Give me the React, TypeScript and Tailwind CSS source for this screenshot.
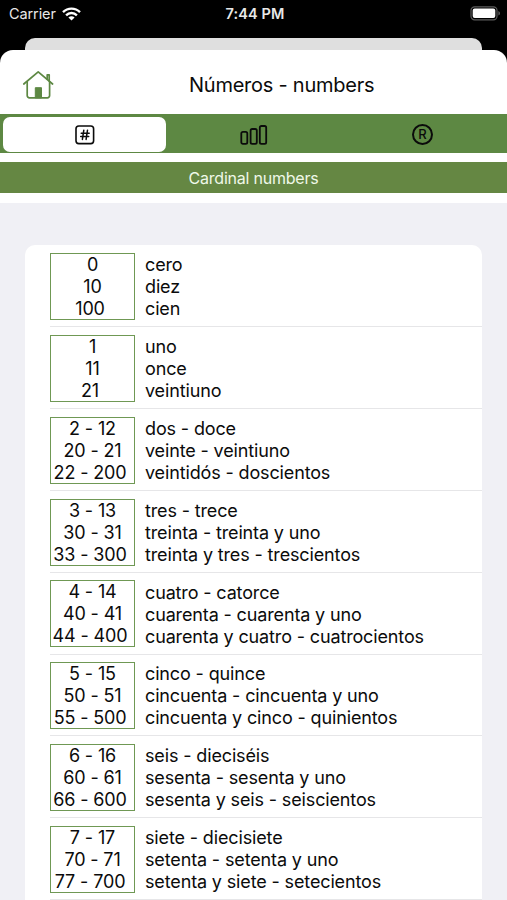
import { useState } from "react";

type Entry = { digits: string[]; words: string[] };

const entries: Entry[] = [
  { digits: ["0", "10", "100 "], words: ["cero", "diez", "cien"] },
  { digits: ["1", "11", "21 "], words: ["uno", "once", "veintiuno"] },
  {
    digits: ["2 - 12", "20 - 21", "22 - 200 "],
    words: ["dos - doce", "veinte - veintiuno", "veintidós - doscientos"],
  },
  {
    digits: ["3 - 13", "30 - 31", "33 - 300 "],
    words: ["tres - trece", "treinta - treinta y uno", "treinta y tres - trescientos"],
  },
  {
    digits: ["4 - 14", "40 - 41", "44 - 400 "],
    words: ["cuatro - catorce", "cuarenta - cuarenta y uno", "cuarenta y cuatro - cuatrocientos"],
  },
  {
    digits: ["5 - 15", "50 - 51", "55 - 500 "],
    words: ["cinco - quince", "cincuenta - cincuenta y uno", "cincuenta y cinco - quinientos"],
  },
  {
    digits: ["6 - 16", "60 - 61", "66 - 600 "],
    words: ["seis - dieciséis", "sesenta - sesenta y uno", "sesenta y seis - seiscientos"],
  },
  {
    digits: ["7 - 17", "70 - 71", "77 - 700 "],
    words: ["siete - diecisiete", "setenta - setenta y uno", "setenta y siete - setecientos"],
  },
];

function WifiIcon() {
  return (
    <svg width="19" height="14" viewBox="0 0 19 14" fill="none" stroke="white" strokeWidth="2.4">
      <path d="M1 5.2C5.8.4 13.2.4 18 5.2" />
      <path d="M4.1 8.3c3-3 7.8-3 10.8 0" />
      <path d="M9.5 13.6 6.4 10.5c1.8-1.6 4.4-1.6 6.2 0z" fill="white" stroke="none" />
    </svg>
  );
}

function BatteryIcon() {
  return (
    <svg width="31" height="15" viewBox="0 0 31 15" fill="none">
      <rect x="1" y="0.8" width="26" height="13" rx="3.6" stroke="#5c5c5c" strokeWidth="1.2" />
      <rect x="2.7" y="2.5" width="22.6" height="9.6" rx="2" fill="white" />
      <path d="M28.5 5v4.6c1.8-.8 1.8-3.8 0-4.6z" fill="#777" />
    </svg>
  );
}

function HouseIcon() {
  return (
    <svg
      width="32"
      height="30"
      viewBox="0 0 32 30"
      fill="none"
      stroke="#5d8843"
      strokeWidth="1.7"
      strokeLinecap="round"
      strokeLinejoin="round"
    >
      <path d="M1.8 14 16.2 1.8 30.6 14" />
      <path d="M5.2 11.8v13.8a2.2 2.2 0 0 0 2.2 2.2h18a2.2 2.2 0 0 0 2.2-2.2V11.8" />
      <path d="M25.2 9.2V4.8h2v6" />
      <path d="M13.3 27.5v-9.8h6.2v9.8z" fill="#5d8843" strokeWidth="1" />
    </svg>
  );
}

function NumberIcon() {
  return (
    <svg width="20" height="20" viewBox="0 0 20 20" fill="none" stroke="currentColor">
      <rect x="1" y="1" width="17.6" height="17.6" rx="2.8" strokeWidth="1.6" />
      <path d="M8.8 5.2 7.4 14.4M12.5 5.2l-1.4 9.2M6.2 8.2h8M5.7 11.5h8" strokeWidth="1.5" strokeLinecap="round" />
    </svg>
  );
}

function BarsIcon() {
  return (
    <svg width="28" height="20" viewBox="0 0 28 20" fill="none" stroke="currentColor" strokeWidth="1.8">
      <rect x="1.3" y="6.8" width="6" height="12" rx="1.6" />
      <rect x="10.6" y="4" width="6.2" height="14.8" rx="1.6" />
      <rect x="19.8" y="1" width="6.4" height="17.8" rx="1.6" />
    </svg>
  );
}

function RegisteredIcon() {
  return (
    <span className="flex size-[21px] items-center justify-center rounded-full border-2 border-current text-[13px] leading-none font-medium">
      R
    </span>
  );
}

const tabs = [
  { id: "cardinal", icon: NumberIcon },
  { id: "ordinal", icon: BarsIcon },
  { id: "rules", icon: RegisteredIcon },
];

export default function App() {
  const [active, setActive] = useState("cardinal");

  return (
    <div className="flex h-[900px] w-[507px] flex-col overflow-hidden bg-black font-['Inter',sans-serif] text-[#0b0b0b]">
      <div className="grid h-[38px] shrink-0 grid-cols-3 items-start pt-[5px] pr-[6px] pl-[9px] text-[#e8e8e8]">
        <div className="-mt-px flex items-center gap-[6px] pt-px text-[14.5px] leading-[17px] tracking-[-0.1px]">
          Carrier
          <WifiIcon />
        </div>
        <div className="text-center text-[14.5px] leading-[18px] font-semibold tracking-[0.1px]">7:44 PM</div>
        <div className="flex justify-end pt-px">
          <BatteryIcon />
        </div>
      </div>

      <div className="mx-[25px] h-3 shrink-0 rounded-t-[10px] bg-[#dfdfdf]" />

      <div className="flex min-h-0 flex-1 flex-col rounded-t-[13px] bg-white">
        <header className="flex h-[64px] shrink-0 items-center pt-[6px] pl-[22px]">
          <HouseIcon />
          <h1 className="ml-[135px] text-[20px] leading-6 tracking-[-0.24px]">Números - numbers</h1>
        </header>

        <nav className="flex h-[39px] shrink-0 gap-[6px] bg-[#5d8843] px-[3px] pt-[3px] pb-px">
          {tabs.map(({ id, icon: Icon }) => (
            <button
              key={id}
              onClick={() => setActive(id)}
              className={`flex w-[163px] items-center justify-center rounded-[7px] ${active === id ? "bg-white" : ""}`}
            >
              <Icon />
            </button>
          ))}
        </nav>

        <div className="mt-[9px] flex h-[31px] shrink-0 items-center justify-center bg-[#658743] text-[16px] tracking-[-0.22px] text-[#eff8e8]">
          Cardinal numbers
        </div>

        <main className="mt-[10px] min-h-0 flex-1 overflow-hidden bg-[#f0f0f5] px-[25px] pt-[42.4px]">
          <ul className="rounded-t-[10px] bg-white pl-[25px]">
            {entries.map((entry) => (
              <li
                key={entry.digits[0]}
                className="flex h-[81.85px] gap-[10px] border-b border-[#e6e6e8] pt-[7.7px] text-[18px] leading-[22px] tracking-[-0.14px]"
              >
                <div className="h-[67px] w-[85px] border-[1.5px] border-[#6f9854] text-center">
                  {entry.digits.map((line) => (
                    <div key={line} className="-mx-2 whitespace-pre">
                      {line}
                    </div>
                  ))}
                </div>
                <div className="pt-[1.2px]">
                  {entry.words.map((line) => (
                    <div key={line}>{line}</div>
                  ))}
                </div>
              </li>
            ))}
          </ul>
        </main>
      </div>
    </div>
  );
}
